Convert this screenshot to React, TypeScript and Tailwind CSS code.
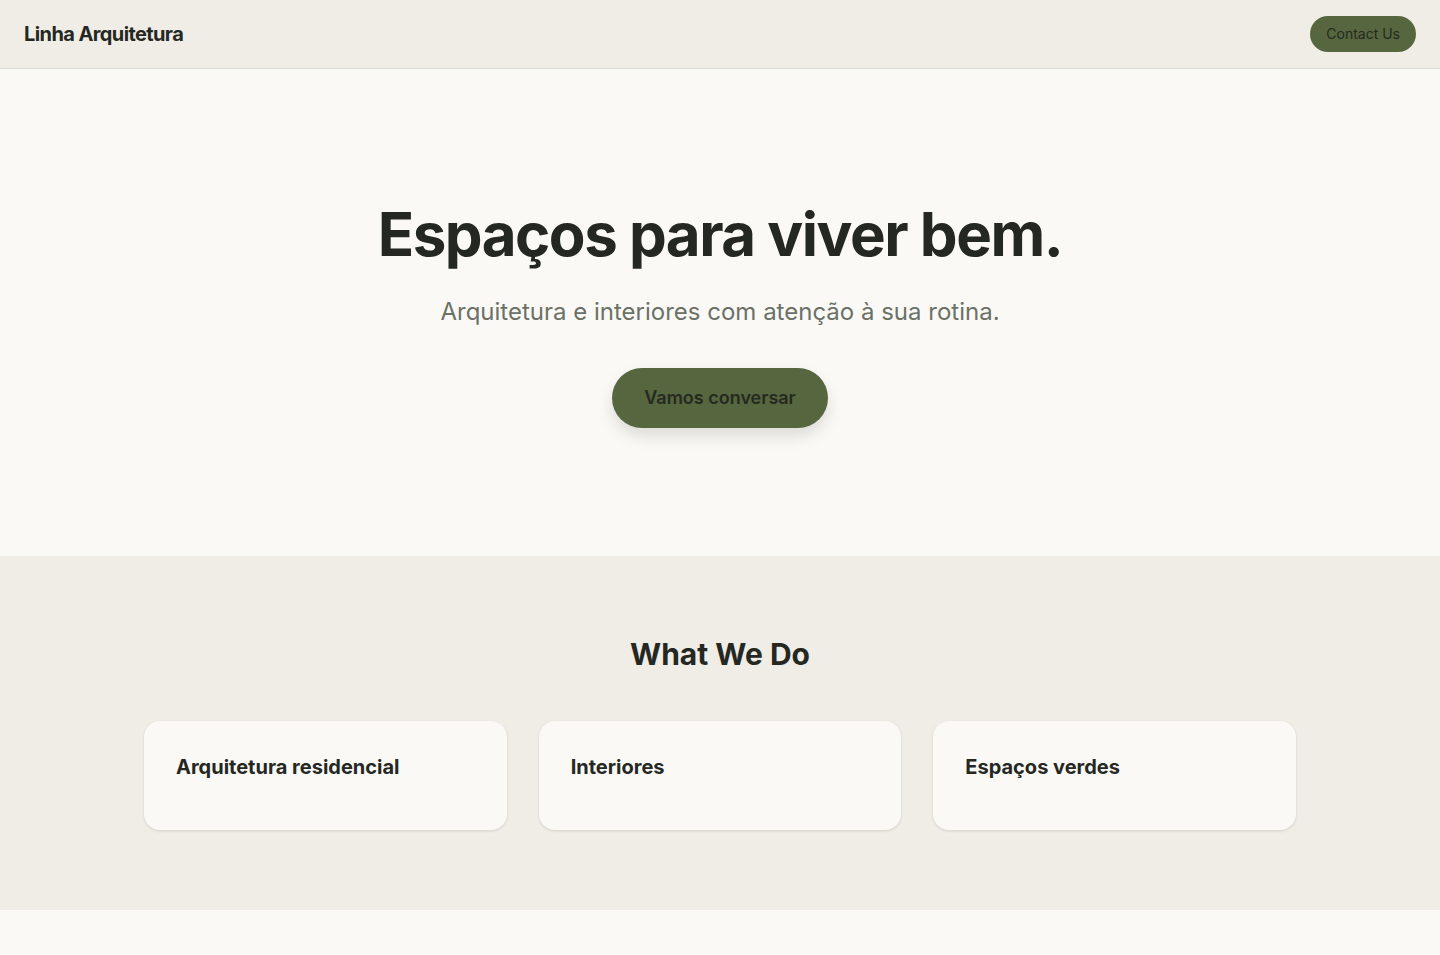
const services = ["Arquitetura residencial", "Interiores", "Espaços verdes"];

export default function App() {
  return (
    <div
      className="min-h-screen bg-[#faf9f6] text-[#252822]"
      style={{ fontFamily: "Inter, 'Liberation Sans', sans-serif" }}
    >
      <header className="flex h-[69px] items-center justify-between border-b border-[#dcd9d2] bg-[#f0ede6] px-6">
        <span className="text-xl font-bold tracking-[-0.03em] text-[#252822]">
          Linha Arquitetura
        </span>
        <button className="h-9 rounded-full bg-[#56663f] px-4 text-sm text-[#252a1f]">
          Contact Us
        </button>
      </header>

      <section className="flex h-[487px] flex-col items-center pt-[135px]">
        <h1 className="text-[60px] font-bold leading-none tracking-[-0.025em] text-[#252822]">
          Espaços para viver bem.
        </h1>
        <p className="mt-[32px] text-2xl text-[#6b7166]">
          Arquitetura e interiores com atenção à sua rotina.
        </p>
        <button className="mt-[40px] h-[60px] w-[216px] rounded-full bg-[#56663f] text-lg font-semibold text-[#252a1f] shadow-[0_8px_16px_rgba(0,0,0,0.12)]">
          Vamos conversar
        </button>
      </section>

      <section className="bg-[#f0ede6] pb-[80px] pt-[80px]">
        <h2 className="text-center text-[30px] font-bold leading-9 text-[#252822]">
          What We Do
        </h2>
        <div className="mx-auto mt-[49px] grid max-w-[1152px] grid-cols-3 gap-8">
          {services.map((s) => (
            <div
              key={s}
              className="h-[109px] rounded-2xl bg-[#faf9f6] px-8 pt-[32px] shadow-[0_1px_3px_rgba(0,0,0,0.12)]"
            >
              <h3 className="text-xl font-bold text-[#252822]">{s}</h3>
            </div>
          ))}
        </div>
      </section>

      <div className="h-[45px]" />
    </div>
  );
}
